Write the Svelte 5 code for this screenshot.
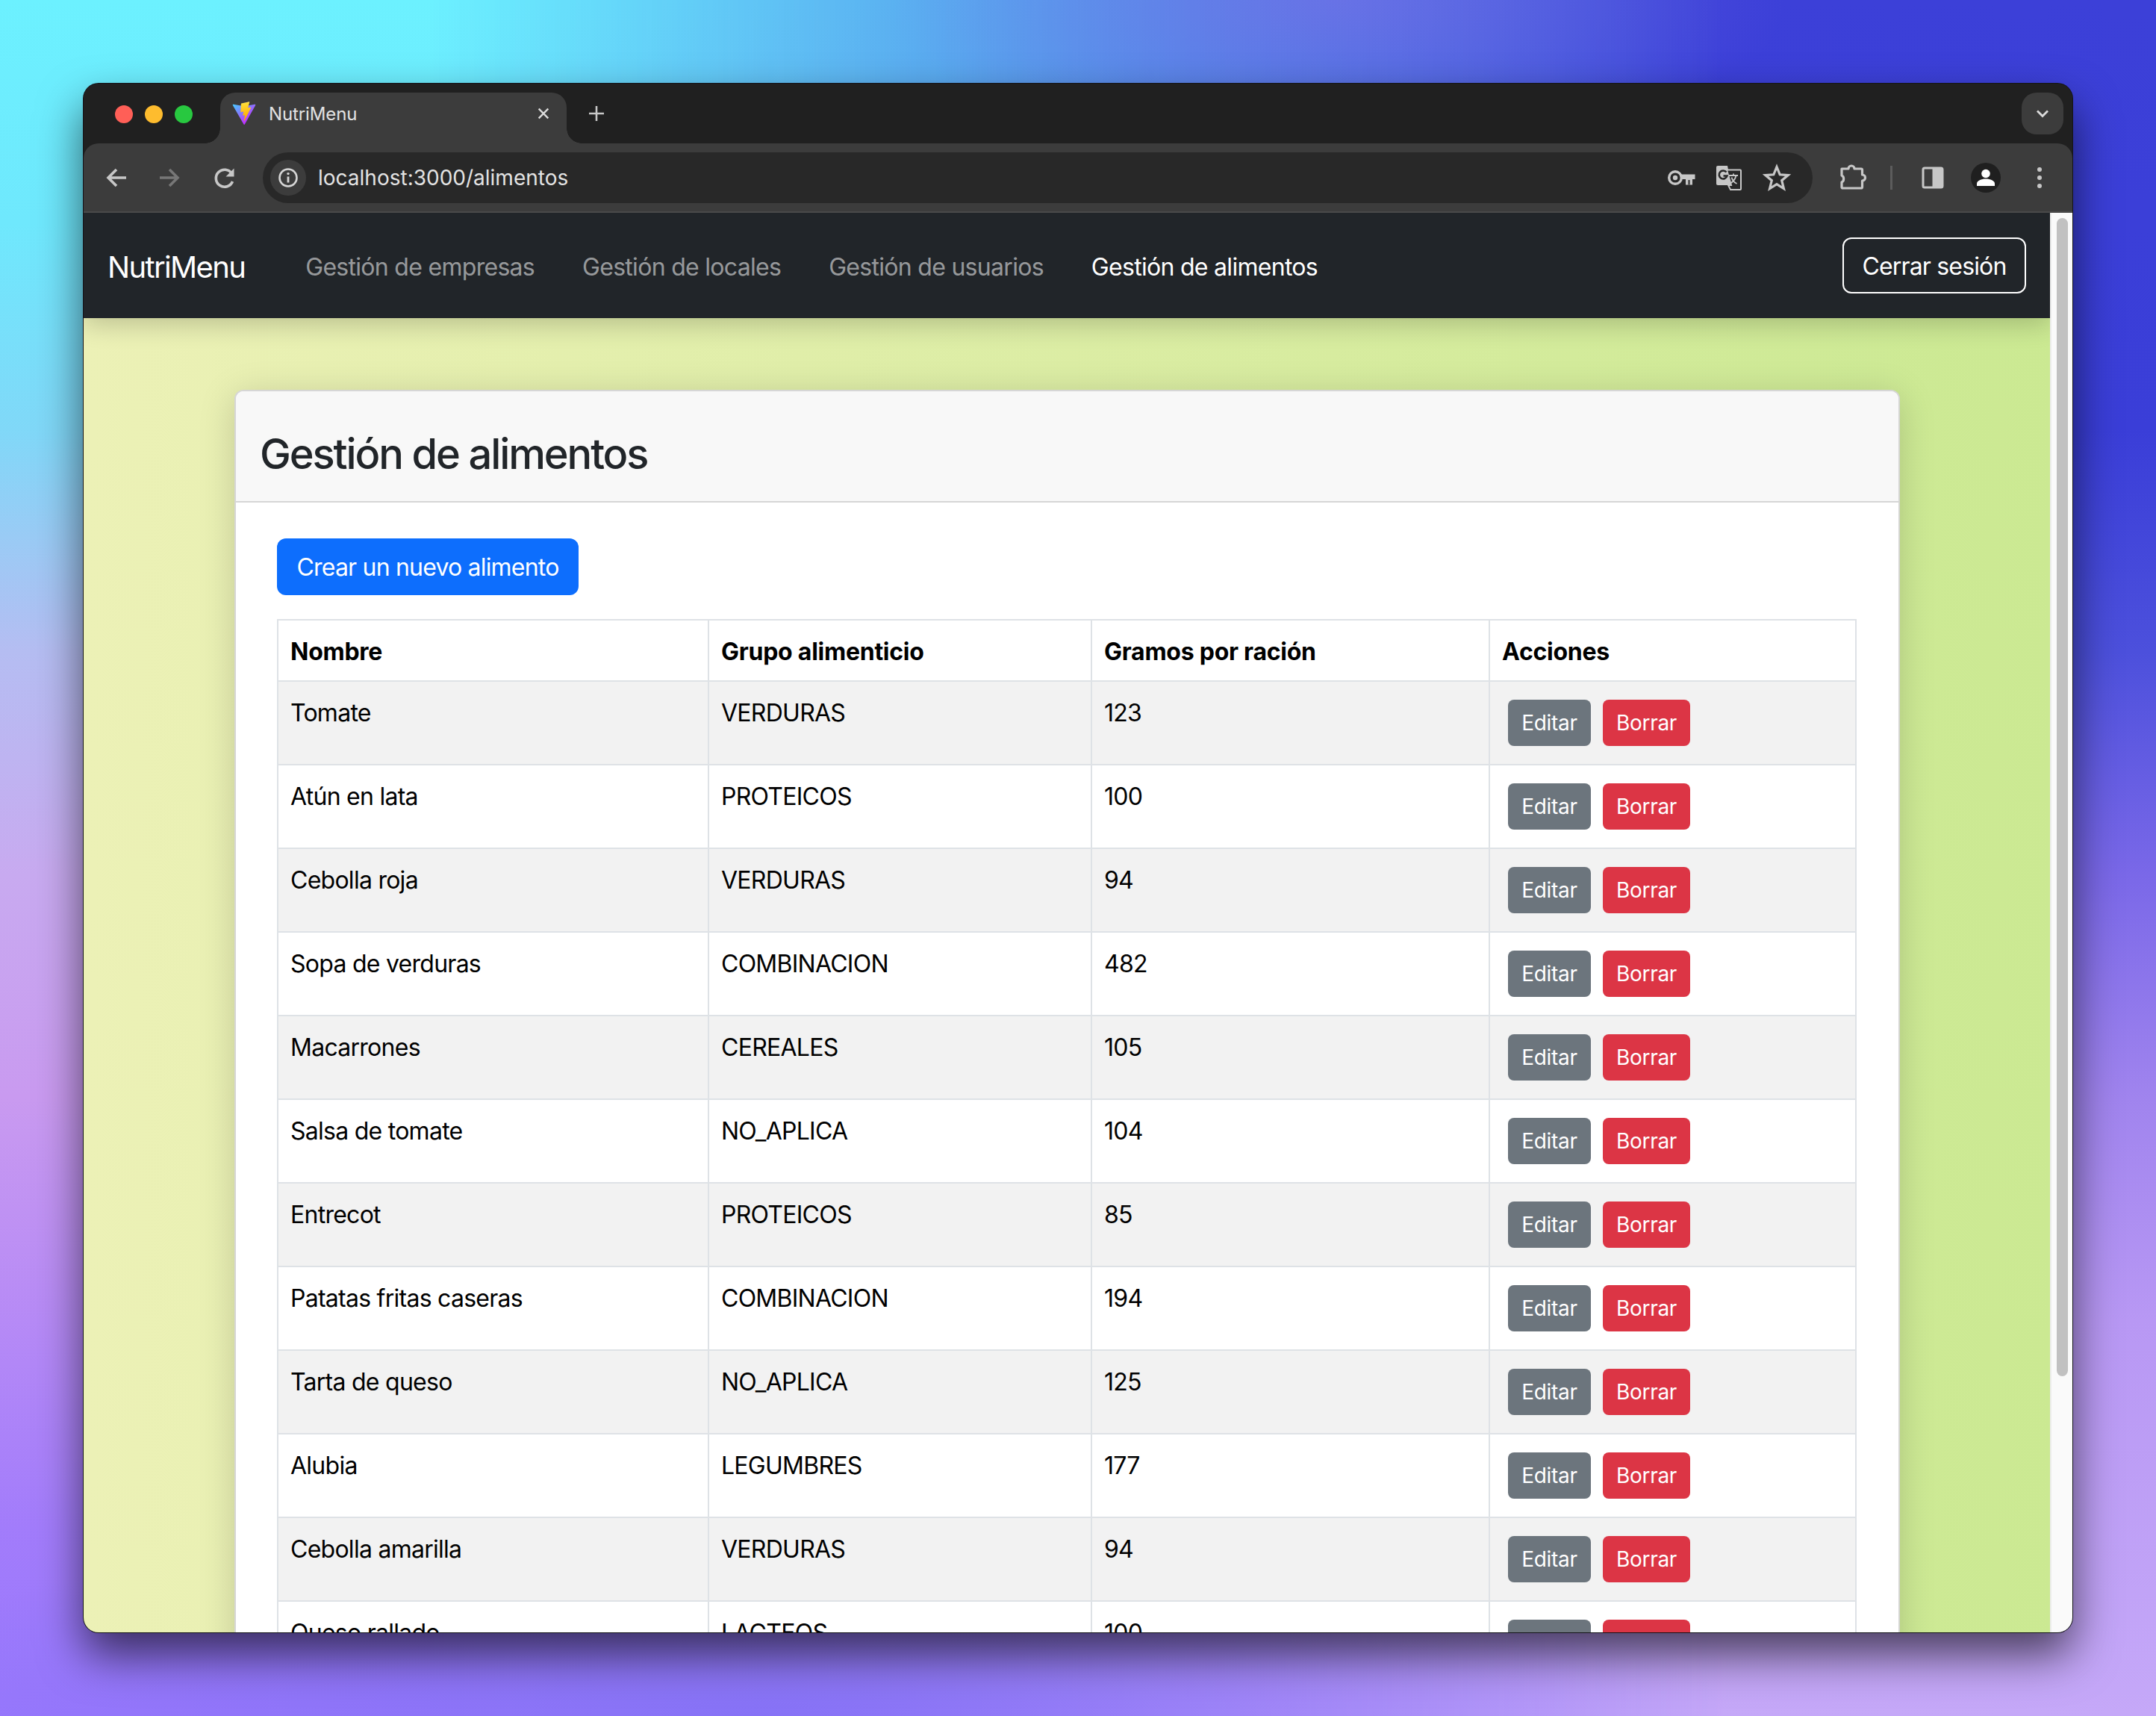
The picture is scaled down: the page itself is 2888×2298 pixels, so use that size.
<script>
  const links = [
    { label: "Gestión de empresas", active: false },
    { label: "Gestión de locales", active: false },
    { label: "Gestión de usuarios", active: false },
    { label: "Gestión de alimentos", active: true },
  ];

  const alimentos = [
    ["Tomate", "VERDURAS", 123],
    ["Atún en lata", "PROTEICOS", 100],
    ["Cebolla roja", "VERDURAS", 94],
    ["Sopa de verduras", "COMBINACION", 482],
    ["Macarrones", "CEREALES", 105],
    ["Salsa de tomate", "NO_APLICA", 104],
    ["Entrecot", "PROTEICOS", 85],
    ["Patatas fritas caseras", "COMBINACION", 194],
    ["Tarta de queso", "NO_APLICA", 125],
    ["Alubia", "LEGUMBRES", 177],
    ["Cebolla amarilla", "VERDURAS", 94],
    ["Queso rallado", "LACTEOS", 100],
  ];
</script>

<div class="desk">
  <div class="window">
    <div class="tabstrip">
      <div class="lights">
        <span class="light red"></span>
        <span class="light amber"></span>
        <span class="light green"></span>
      </div>
      <div class="tab">
        <svg class="favicon" viewBox="0 0 410 404" width="32" height="32">
          <defs>
            <linearGradient id="va" x1="6" y1="33" x2="235" y2="344" gradientUnits="userSpaceOnUse">
              <stop stop-color="#41D1FF" />
              <stop offset="1" stop-color="#BD34FE" />
            </linearGradient>
            <linearGradient id="vb" x1="194.65" y1="8.81" x2="236.08" y2="292.99" gradientUnits="userSpaceOnUse">
              <stop stop-color="#FFEA83" />
              <stop offset="0.083" stop-color="#FFDD35" />
              <stop offset="1" stop-color="#FFA800" />
            </linearGradient>
          </defs>
          <path fill="url(#va)" d="M399.641 59.5246L215.643 388.545C211.844 395.338 202.084 395.378 198.228 388.618L10.5817 59.5563C6.38087 52.1896 12.6802 43.2665 21.0281 44.7586L205.223 77.6824C206.398 77.8924 207.601 77.8904 208.776 77.6763L389.119 44.8058C397.439 43.2894 403.768 52.1434 399.641 59.5246Z" />
          <path fill="url(#vb)" d="M292.965 1.5744L156.801 28.2552C154.563 28.6937 152.906 30.5903 152.771 32.8664L144.395 174.33C144.198 177.662 147.258 180.248 150.51 179.498L188.42 170.749C191.967 169.931 195.172 173.055 194.443 176.622L183.18 231.775C182.422 235.487 185.907 238.661 189.532 237.56L212.947 230.446C216.577 229.344 220.065 232.527 219.297 236.242L201.398 322.875C200.278 328.294 207.486 331.249 210.492 326.603L212.5 323.5L323.454 102.072C325.312 98.3645 322.108 94.137 318.036 94.9228L279.014 102.454C275.347 103.161 272.227 99.746 273.262 96.1583L298.731 7.86689C299.767 4.27314 296.636 0.855181 292.965 1.5744Z" />
        </svg>
        <span class="tab-title">NutriMenu</span>
        <svg class="tab-close" viewBox="0 0 20 20" width="20" height="20">
          <path d="M3 3l14 14M17 3L3 17" stroke="#dcdcdc" stroke-width="2.6" fill="none" />
        </svg>
      </div>
      <svg class="new-tab" viewBox="0 0 24 24" width="24" height="24">
        <path d="M12 2v20M2 12h20" stroke="#c8c8c8" stroke-width="2.6" fill="none" />
      </svg>
      <div class="tab-menu">
        <svg viewBox="0 0 20 20" width="20" height="20">
          <path d="M3 6.5l7 7 7-7" stroke="#dcdcdc" stroke-width="2.8" fill="none" />
        </svg>
      </div>
    </div>

    <div class="toolbar">
      <svg class="tool back" viewBox="0 0 40 40" width="40" height="40">
        <path d="M33 20H9M20 9L9 20l11 11" stroke="#c7c7c7" stroke-width="3.6" fill="none" />
      </svg>
      <svg class="tool forward" viewBox="0 0 40 40" width="40" height="40">
        <path d="M7 20h24M20 9l11 11-11 11" stroke="#777" stroke-width="3.6" fill="none" />
      </svg>
      <svg class="tool reload" viewBox="0 0 40 40" width="40" height="40">
        <path d="M30.5 25a11.5 11.500 0 1 1-1-10.500" stroke="#c7c7c7" stroke-width="3.6" fill="none" />
        <path d="M32.5 7.5v11h-11z" fill="#c7c7c7" />
      </svg>

      <div class="omnibox">
        <span class="site-info">
          <svg viewBox="0 0 28 28" width="28" height="28">
            <circle cx="14" cy="14" r="11.5" stroke="#d6d6d6" stroke-width="2.6" fill="none" />
            <path d="M14 12.5v8" stroke="#d6d6d6" stroke-width="2.8" />
            <circle cx="14" cy="8.6" r="1.7" fill="#d6d6d6" />
          </svg>
        </span>
        <span class="url">localhost:3000/alimentos</span>
        <span class="omni-icons">
          <svg viewBox="0 0 40 40" width="40" height="40">
            <circle cx="12" cy="20" r="8.300" stroke="#c7c7c7" stroke-width="3.400" fill="none" />
            <circle cx="12" cy="20" r="3.200" fill="#c7c7c7" />
            <path d="M20 15.500h18.500V22H35v7.500h-9V22h-6z" fill="#c7c7c7" />
            <path d="M29.500 23v6.500h2V23z" fill="#282828" />
          </svg>
          <svg viewBox="0 0 40 40" width="40" height="40">
            <path d="M5 4h13l5 26H5a2 2 0 0 1-2-2V6a2 2 0 0 1 2-2z" fill="#c7c7c7" />
            <path d="M17 9.500h18a1 1 0 0 1 1 1V35a1 1 0 0 1-1 1H22l-3-6h4z" fill="#282828" stroke="#c7c7c7" stroke-width="2" />
            <path d="M16.500 12.500a5.500 5.500 0 1 0 1 5h-5" stroke="#282828" stroke-width="2.600" fill="none" />
            <path d="M20 17h12M26 14.500V17M29.500 17c-1 5-5 9-8 11M23.500 19.500c1 4 4 7 7 8.500" stroke="#c7c7c7" stroke-width="1.800" fill="none" />
          </svg>
          <svg viewBox="0 0 40 40" width="40" height="40">
            <path d="M20 5.500l4.200 10.300 11 .8-8.500 7.100 2.700 10.800L20 28.600l-9.400 5.900 2.700-10.800-8.500-7.100 11-.8z" stroke="#c7c7c7" stroke-width="3.200" fill="none" stroke-linejoin="miter" />
          </svg>
        </span>
      </div>

      <svg class="tool puzzle" viewBox="0 0 40 40" width="40" height="40">
        <path d="M7 8h9a4 4 0 0 1 8 0h9a1.500 1.500 0 0 1 1.500 1.500V16a4 4 0 0 1 0 8v8.500A1.500 1.500 0 0 1 33 34H8.500A1.500 1.500 0 0 1 7 32.500V26c3.500-1.500 3.500-7.500 0-9z" stroke="#c7c7c7" stroke-width="3.200" fill="none" stroke-linejoin="round" />
      </svg>
      <span class="divider"></span>
      <svg class="tool sidebar" viewBox="0 0 40 40" width="40" height="40">
        <rect x="7" y="7" width="26" height="26" rx="2" stroke="#c7c7c7" stroke-width="3" fill="none" />
        <rect x="19.500" y="7" width="13.500" height="26" fill="#c7c7c7" />
      </svg>
      <span class="avatar">
        <svg viewBox="0 0 40 40" width="40" height="40">
          <circle cx="20" cy="20" r="20" fill="#1f1f1f" />
          <circle cx="20" cy="14.500" r="5.800" fill="#fff" />
          <path d="M8 31v-3c0-4 6-6.500 12-6.500S32 24 32 28v3z" fill="#fff" />
        </svg>
      </span>
      <svg class="tool dots" viewBox="0 0 40 40" width="40" height="40">
        <circle cx="20" cy="9" r="3" fill="#c7c7c7" />
        <circle cx="20" cy="20" r="3" fill="#c7c7c7" />
        <circle cx="20" cy="31" r="3" fill="#c7c7c7" />
      </svg>
    </div>

    <div class="viewport">
      <div class="page">
        <nav class="navbar">
          <span class="brand">NutriMenu</span>
          <ul class="nav-links">
            {#each links as link}
              <li class:active={link.active}>{link.label}</li>
            {/each}
          </ul>
          <button class="logout">Cerrar sesión</button>
        </nav>

        <main class="content">
          <section class="card">
            <header class="card-header">
              <h3>Gestión de alimentos</h3>
            </header>
            <div class="card-body">
              <button class="btn primary">Crear un nuevo alimento</button>
              <table>
                <colgroup>
                  <col class="c1" />
                  <col class="c2" />
                  <col class="c3" />
                  <col class="c4" />
                </colgroup>
                <thead>
                  <tr>
                    <th>Nombre</th>
                    <th>Grupo alimenticio</th>
                    <th>Gramos por ración</th>
                    <th>Acciones</th>
                  </tr>
                </thead>
                <tbody>
                  {#each alimentos as [nombre, grupo, gramos]}
                    <tr>
                      <td>{nombre}</td>
                      <td>{grupo}</td>
                      <td>{gramos}</td>
                      <td>
                        <div class="actions">
                          <button class="btn small grey">Editar</button>
                          <button class="btn small red-btn">Borrar</button>
                        </div>
                      </td>
                    </tr>
                  {/each}
                </tbody>
              </table>
            </div>
          </section>
        </main>
      </div>
      <div class="scrollbar">
        <span class="thumb"></span>
      </div>
    </div>
  </div>
</div>

<style>
  :global(body) {
    margin: 0;
  }

  .desk {
    position: relative;
    width: 2888px;
    height: 2298px;
    box-sizing: border-box;
    padding: 112px 112px 0 112px;
    overflow: hidden;
    font-family: Inter, "Liberation Sans", sans-serif;
    background: linear-gradient(180deg, #3c40d8 0%, #3a3ed8 25%, #4c50dc 38%, #7a68e8 51%, #a084ee 64%, #b898f4 77%, #c5a8f8 100%);
  }

  /* left colour column, faded out towards the right, plus the darker bottom middle */
  .desk::before {
    content: "";
    position: absolute;
    inset: 0;
    background: linear-gradient(180deg, #6cf1ff 0%, #6fe8fd 13%, #80d8f8 25%, #b5bdf2 38%, #c8aaf0 51%, #c99af0 64%, #b68af6 77%, #a27cfb 89%, #9a78fd 100%);
    -webkit-mask-image: linear-gradient(90deg, #000 20%, transparent 80%);
    mask-image: linear-gradient(90deg, #000 20%, transparent 80%);
  }

  .desk::after {
    content: "";
    position: absolute;
    inset: 0;
    background:
      radial-gradient(ellipse 600px 220px at 62% 0, rgba(128, 112, 232, 0.55) 0%, rgba(128, 112, 232, 0) 100%),
      radial-gradient(ellipse 1300px 260px at 35% 100%, #8672f6 0%, rgba(134, 114, 246, 0) 100%);
  }

  .window {
    position: relative;
    z-index: 1;
    width: 2664px;
    height: 2074px;
    border-radius: 20px;
    overflow: hidden;
    background: #202020;
    display: flex;
    flex-direction: column;
    box-shadow:
      0 0 0 1px #14141a,
      0 30px 60px rgba(0, 0, 0, 0.62);
  }

  .tabstrip {
    height: 80px;
    flex: none;
    display: flex;
    align-items: flex-start;
    padding-top: 12px;
    box-sizing: border-box;
    background: #202020;
  }

  .lights {
    display: flex;
    gap: 16px;
    margin: 17px 0 0 42px;
    width: 142px;
  }

  .light {
    width: 24px;
    height: 24px;
    border-radius: 50%;
  }

  .red { background: #ff5f57; }
  .amber { background: #febc2e; }
  .green { background: #28c840; }

  .tab {
    position: relative;
    width: 464px;
    height: 68px;
    margin-left: -1px;
    box-sizing: border-box;
    padding: 0 22px 12px 16px;
    display: flex;
    align-items: center;
    background: #3c3c3c;
    border-radius: 20px 20px 0 0;
  }

  .tab::before,
  .tab::after {
    content: "";
    position: absolute;
    bottom: 0;
    width: 20px;
    height: 20px;
  }

  .tab::before {
    left: -20px;
    background: radial-gradient(circle at 0 0, transparent 19.500px, #3c3c3c 20px);
  }

  .tab::after {
    right: -20px;
    background: radial-gradient(circle at 100% 0, transparent 19.500px, #3c3c3c 20px);
  }

  .favicon {
    flex: none;
  }

  .tab-title {
    margin-left: 17px;
    font-size: 24px;
    letter-spacing: -0.005em;
    color: #e3e3e3;
    flex: 1;
  }

  .tab-close {
    flex: none;
    width: 18px;
    height: 18px;
  }

  .new-tab {
    margin: 16px 0 0 28px;
    flex: none;
  }

  .tab-menu {
    margin-left: auto;
    margin-right: 12px;
    width: 56px;
    height: 56px;
    border-radius: 20px;
    background: #3c3c3c;
    display: flex;
    align-items: center;
    justify-content: center;
  }

  .toolbar {
    height: 93px;
    flex: none;
    box-sizing: border-box;
    display: flex;
    align-items: center;
    padding: 0 24px;
    background: #3c3c3c;
    border-radius: 20px 20px 0 0;
    border-bottom: 2px solid #4a4a4a;
  }

  .tool {
    flex: none;
  }

  .forward { margin-left: 31px; }
  .reload { margin-left: 34px; }

  .omnibox {
    flex: 1;
    height: 68px;
    margin-left: 31px;
    box-sizing: border-box;
    padding: 0 28px 0 10px;
    display: flex;
    align-items: center;
    background: #282828;
    border-radius: 34px;
  }

  .site-info {
    width: 48px;
    height: 48px;
    flex: none;
    border-radius: 50%;
    background: #3c3c3c;
    display: flex;
    align-items: center;
    justify-content: center;
  }

  .url {
    margin-left: 16px;
    font-size: 28px;
    color: #e3e3e3;
    flex: 1;
  }

  .omni-icons {
    display: flex;
    gap: 24px;
  }

  .puzzle { margin-left: 32px; }

  .divider {
    width: 3px;
    height: 32px;
    margin-left: 32px;
    background: #5c5c5c;
    flex: none;
  }

  .sidebar { margin-left: 34px; }

  .avatar {
    margin-left: 31px;
    width: 40px;
    height: 40px;
    flex: none;
  }

  .dots { margin-left: 32px; }

  .viewport {
    flex: 1;
    min-height: 0;
    display: flex;
  }

  .page {
    flex: 1;
    min-width: 0;
    overflow: hidden;
    background: linear-gradient(90deg, #ecf1b6, #cbe992);
  }

  .scrollbar {
    width: 30px;
    flex: none;
    box-sizing: border-box;
    padding: 7px 6px 0 7px;
    background: #fafafa;
    border-left: 2px solid #ececec;
  }

  .thumb {
    display: block;
    height: 1551px;
    border-radius: 8px;
    background: #c1c1c1;
  }

  .navbar {
    height: 141px;
    box-sizing: border-box;
    padding: 0 32px 0 32px;
    display: flex;
    align-items: center;
    background: #212529;
    box-shadow: 0 8px 32px rgba(0, 0, 0, 0.2);
    position: relative;
  }

  .brand {
    font-size: 40px;
    letter-spacing: -0.041em;
    color: #fff;
    margin-right: 81px;
    padding-top: 3px;
  }

  .nav-links {
    list-style: none;
    display: flex;
    gap: 64px;
    margin: 0;
    padding: 3px 0 0;
    flex: 1;
    font-size: 32px;
    letter-spacing: -0.022em;
    color: rgba(255, 255, 255, 0.55);
  }

  .nav-links .active {
    color: #fff;
  }

  .logout {
    width: 246px;
    height: 75px;
    padding: 2px 0 0;
    font: inherit;
    font-size: 32px;
    letter-spacing: -0.026em;
    color: #fff;
    background: transparent;
    border: 2px solid #fff;
    border-radius: 12px;
  }

  .content {
    padding: 96px 201px 0 202px;
  }

  .card {
    background: #fff;
    border: 2px solid #d6d6d6;
    border-radius: 12px;
    box-shadow: 0 8px 48px rgba(0, 0, 0, 0.17);
    overflow: hidden;
  }

  .card-header {
    height: 149px;
    box-sizing: border-box;
    padding: 21px 32px 0;
    display: flex;
    align-items: center;
    background: #f8f8f8;
    border-bottom: 2px solid #d6d6d6;
  }

  h3 {
    margin: 0;
    font-size: 56px;
    font-weight: 500;
    letter-spacing: -0.038em;
    color: #212529;
  }

  .card-body {
    padding: 48px 56px 0 55px;
  }

  .btn {
    font: inherit;
    color: #fff;
    border: none;
    padding: 0;
    display: block;
  }

  .primary {
    width: 404px;
    height: 76px;
    font-size: 32px;
    letter-spacing: -0.025em;
    background: #0d6efd;
    border-radius: 12px;
    margin-bottom: 32px;
  }

  .small {
    height: 62px;
    font-size: 28px;
    letter-spacing: -0.01em;
    border-radius: 8px;
  }

  .grey {
    width: 111px;
    background: #6c757d;
  }

  .red-btn {
    width: 117px;
    background: #dc3545;
  }

  table {
    width: 2114px;
    table-layout: fixed;
    border-collapse: collapse;
    font-size: 32px;
    line-height: 48px;
    color: #000;
  }

  .c1 { width: 577px; }
  .c2 { width: 513px; }
  .c3 { width: 533px; }
  .c4 { width: 491px; }

  th,
  td {
    border: 2px solid #dee2e6;
    padding: 18px 16px 14px;
    text-align: left;
    vertical-align: top;
    letter-spacing: -0.023em;
    background: #fff;
  }

  th {
    font-weight: 700;
    letter-spacing: -0.008em;
  }

  td:last-child {
    padding: 16px;
  }

  tbody tr:nth-child(odd) td {
    background: #f2f2f2;
  }

  .actions {
    display: flex;
    gap: 16px;
    padding: 8px;
  }
</style>
